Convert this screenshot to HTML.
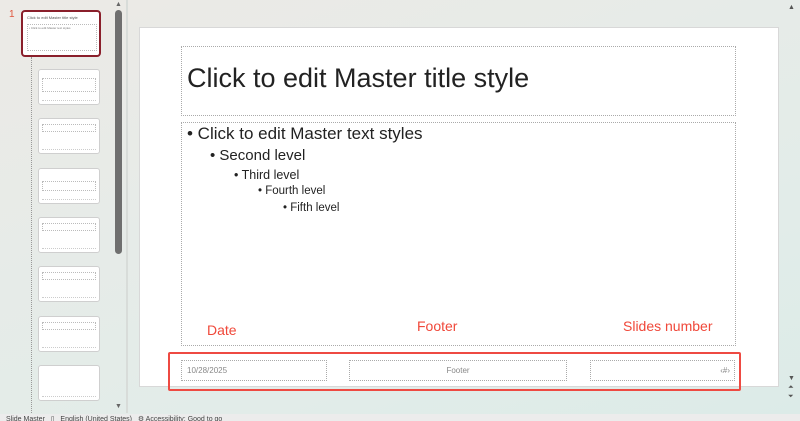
<!DOCTYPE html><html style="overflow:hidden;width:800px;height:421px"><head><style>
*{margin:0;padding:0;box-sizing:border-box}
body{width:800px;height:421px;overflow:hidden;background:linear-gradient(160deg,#eceae6,#e2ece9 70%,#dcebe8);font-family:"Liberation Sans",sans-serif;position:relative}
.a{position:absolute}
.th{position:absolute;left:38px;width:62px;height:36px;background:#fff;border:1px solid #cfcfcf;border-radius:3px}
.th i{position:absolute;left:3px;right:3px;top:5px;height:8px;border:1px dotted #bbb}
.th b{position:absolute;left:3px;right:3px;bottom:2px;height:2px;border-top:1px dotted #ccc}
.dot{border:1px dotted #aaa}
.red{color:#f0483a;font-size:14px;position:absolute}
.fb{position:absolute;top:360px;height:21px;border:1px dotted #aaa;font-size:8px;color:#888;line-height:19px}
</style></head><body>
<div class="a" style="left:9px;top:9px;color:#e0553c;font-size:10px">1</div>
<div class="a" style="left:21px;top:10px;width:80px;height:47px;border:2px solid #8a1f2b;border-radius:4px;background:#fff">
 <div class="a" style="left:4px;top:3px;width:70px;height:8px;font-size:4px;color:#555">Click to edit Master title style</div>
 <div class="a" style="left:4px;top:12px;width:70px;height:27px;border:1px dotted #bbb;font-size:3px;color:#777;padding:1px">• Click to edit Master text styles</div>
</div>
<div class="a" style="left:31px;top:57px;height:364px;border-left:1px dotted #999"></div>
<div class="th" style="top:69px"><i style="top:8px;height:14px"></i><b></b></div>
<div class="th" style="top:118px"><i></i><b></b></div>
<div class="th" style="top:168px"><i style="top:12px;height:10px"></i><b></b></div>
<div class="th" style="top:217px"><i></i><b></b></div>
<div class="th" style="top:266px"><i></i><b></b></div>
<div class="th" style="top:316px"><i></i><b></b></div>
<div class="th" style="top:365px"><b></b></div>
<div class="a" style="left:115px;top:10px;width:7px;height:244px;background:#6f6f6f;border-radius:4px"></div>
<div class="a" style="left:115px;top:1px;font-size:7px;color:#666">▲</div>
<div class="a" style="left:115px;top:403px;font-size:7px;color:#666">▼</div>
<div class="a" style="left:126px;top:0;width:2px;height:413px;background:#d8dcd9"></div>
<div class="a" style="left:139px;top:27px;width:640px;height:360px;background:#fff;border:1px solid #d8d8d8"></div>
<div class="a dot" style="left:181px;top:46px;width:555px;height:70px"></div>
<div class="a" style="left:187px;top:63px;font-size:27px;color:#222">Click to edit Master title style</div>
<div class="a dot" style="left:181px;top:122px;width:555px;height:224px"></div>
<div class="a" style="left:187px;top:124px;font-size:17px;color:#222">• Click to edit Master text styles</div>
<div class="a" style="left:210px;top:147px;font-size:15px;color:#222">• Second level</div>
<div class="a" style="left:234px;top:168px;font-size:12.5px;color:#222">• Third level</div>
<div class="a" style="left:258px;top:185px;font-size:11.5px;color:#222">• Fourth level</div>
<div class="a" style="left:283px;top:202px;font-size:11.5px;color:#222">• Fifth level</div>
<div class="red" style="left:207px;top:322px">Date</div>
<div class="red" style="left:417px;top:318px">Footer</div>
<div class="red" style="left:623px;top:318px">Slides number</div>
<div class="fb" style="left:181px;width:146px;padding-left:5px">10/28/2025</div>
<div class="fb" style="left:349px;width:218px;text-align:center">Footer</div>
<div class="fb" style="left:590px;width:145px;text-align:right;padding-right:4px">‹#›</div>
<div class="a" style="left:168px;top:352px;width:573px;height:39px;border:2px solid #ee4a42;border-radius:2px"></div>
<div class="a" style="left:788px;top:4px;font-size:7px;color:#555">▲</div>
<div class="a" style="left:788px;top:374px;font-size:7px;color:#555;line-height:9px">▼<br>⏶<br>⏷</div>
<div class="a" style="left:0;top:414px;width:800px;height:7px;background:#ececec;font-size:7px;color:#444;padding-left:6px;line-height:12px;overflow:hidden;white-space:nowrap">Slide Master &nbsp; ▯ &nbsp; English (United States) &nbsp; ⚙ Accessibility: Good to go</div>
</body></html>
